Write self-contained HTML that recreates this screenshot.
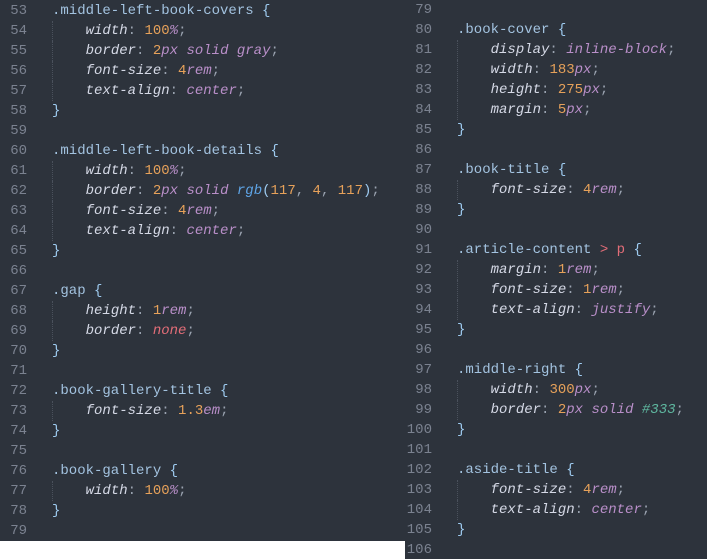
<!DOCTYPE html><html><head><style>
body{margin:0;width:707px;height:559px;background:#fff;overflow:hidden;font-family:"Liberation Mono",monospace;font-size:14px}
.p{position:absolute;top:0;background:#2d333c}
.l{height:20px;line-height:20px;white-space:pre;position:relative}
.n{display:inline-block;width:27px;text-align:right;color:#7b8290;margin-right:25px}
.i::before{content:"";position:absolute;left:52px;top:0;height:20px;border-left:1px dotted #4a515c}
.s{color:#a3c3e0}.k{color:#d5d9e6;font-style:italic}.v{color:#e6a15a}.u{color:#b98fc9;font-style:italic}.w{color:#b98fc9;font-style:italic}
.r{color:#e26d78;font-style:italic}.f{color:#5fa6e8;font-style:italic}.c{color:#9aa3b0}.b{color:#9ecbf0}.h{color:#5fb8a0;font-style:italic}
</style></head><body>
<div class="p" style="left:0;width:405px;height:540px;padding-top:1px">
<div class="l"><span class="n">53</span><span class="s">.middle-left-book-covers</span> <span class="b">{</span></div>
<div class="l i"><span class="n">54</span>    <span class="k">width</span><span class="c">:</span> <span class="v">100</span><span class="u">%</span><span class="c">;</span></div>
<div class="l i"><span class="n">55</span>    <span class="k">border</span><span class="c">:</span> <span class="v">2</span><span class="u">px</span> <span class="w">solid gray</span><span class="c">;</span></div>
<div class="l i"><span class="n">56</span>    <span class="k">font-size</span><span class="c">:</span> <span class="v">4</span><span class="u">rem</span><span class="c">;</span></div>
<div class="l i"><span class="n">57</span>    <span class="k">text-align</span><span class="c">:</span> <span class="w">center</span><span class="c">;</span></div>
<div class="l"><span class="n">58</span><span class="b">}</span></div>
<div class="l"><span class="n">59</span></div>
<div class="l"><span class="n">60</span><span class="s">.middle-left-book-details</span> <span class="b">{</span></div>
<div class="l i"><span class="n">61</span>    <span class="k">width</span><span class="c">:</span> <span class="v">100</span><span class="u">%</span><span class="c">;</span></div>
<div class="l i"><span class="n">62</span>    <span class="k">border</span><span class="c">:</span> <span class="v">2</span><span class="u">px</span> <span class="w">solid</span> <span class="f">rgb</span><span class="b">(</span><span class="v">117</span><span class="c">,</span> <span class="v">4</span><span class="c">,</span> <span class="v">117</span><span class="b">)</span><span class="c">;</span></div>
<div class="l i"><span class="n">63</span>    <span class="k">font-size</span><span class="c">:</span> <span class="v">4</span><span class="u">rem</span><span class="c">;</span></div>
<div class="l i"><span class="n">64</span>    <span class="k">text-align</span><span class="c">:</span> <span class="w">center</span><span class="c">;</span></div>
<div class="l"><span class="n">65</span><span class="b">}</span></div>
<div class="l"><span class="n">66</span></div>
<div class="l"><span class="n">67</span><span class="s">.gap</span> <span class="b">{</span></div>
<div class="l i"><span class="n">68</span>    <span class="k">height</span><span class="c">:</span> <span class="v">1</span><span class="u">rem</span><span class="c">;</span></div>
<div class="l i"><span class="n">69</span>    <span class="k">border</span><span class="c">:</span> <span class="r">none</span><span class="c">;</span></div>
<div class="l"><span class="n">70</span><span class="b">}</span></div>
<div class="l"><span class="n">71</span></div>
<div class="l"><span class="n">72</span><span class="s">.book-gallery-title</span> <span class="b">{</span></div>
<div class="l i"><span class="n">73</span>    <span class="k">font-size</span><span class="c">:</span> <span class="v">1.3</span><span class="u">em</span><span class="c">;</span></div>
<div class="l"><span class="n">74</span><span class="b">}</span></div>
<div class="l"><span class="n">75</span></div>
<div class="l"><span class="n">76</span><span class="s">.book-gallery</span> <span class="b">{</span></div>
<div class="l i"><span class="n">77</span>    <span class="k">width</span><span class="c">:</span> <span class="v">100</span><span class="u">%</span><span class="c">;</span></div>
<div class="l"><span class="n">78</span><span class="b">}</span></div>
<div class="l"><span class="n">79</span></div>
</div>
<div class="p" style="left:405px;width:302px;height:559px;padding-top:0">
<div class="l"><span class="n">79</span></div>
<div class="l"><span class="n">80</span><span class="s">.book-cover</span> <span class="b">{</span></div>
<div class="l i"><span class="n">81</span>    <span class="k">display</span><span class="c">:</span> <span class="w">inline-block</span><span class="c">;</span></div>
<div class="l i"><span class="n">82</span>    <span class="k">width</span><span class="c">:</span> <span class="v">183</span><span class="u">px</span><span class="c">;</span></div>
<div class="l i"><span class="n">83</span>    <span class="k">height</span><span class="c">:</span> <span class="v">275</span><span class="u">px</span><span class="c">;</span></div>
<div class="l i"><span class="n">84</span>    <span class="k">margin</span><span class="c">:</span> <span class="v">5</span><span class="u">px</span><span class="c">;</span></div>
<div class="l"><span class="n">85</span><span class="b">}</span></div>
<div class="l"><span class="n">86</span></div>
<div class="l"><span class="n">87</span><span class="s">.book-title</span> <span class="b">{</span></div>
<div class="l i"><span class="n">88</span>    <span class="k">font-size</span><span class="c">:</span> <span class="v">4</span><span class="u">rem</span><span class="c">;</span></div>
<div class="l"><span class="n">89</span><span class="b">}</span></div>
<div class="l"><span class="n">90</span></div>
<div class="l"><span class="n">91</span><span class="s">.article-content</span> <span class="r" style="font-style:normal">&gt; p</span> <span class="b">{</span></div>
<div class="l i"><span class="n">92</span>    <span class="k">margin</span><span class="c">:</span> <span class="v">1</span><span class="u">rem</span><span class="c">;</span></div>
<div class="l i"><span class="n">93</span>    <span class="k">font-size</span><span class="c">:</span> <span class="v">1</span><span class="u">rem</span><span class="c">;</span></div>
<div class="l i"><span class="n">94</span>    <span class="k">text-align</span><span class="c">:</span> <span class="w">justify</span><span class="c">;</span></div>
<div class="l"><span class="n">95</span><span class="b">}</span></div>
<div class="l"><span class="n">96</span></div>
<div class="l"><span class="n">97</span><span class="s">.middle-right</span> <span class="b">{</span></div>
<div class="l i"><span class="n">98</span>    <span class="k">width</span><span class="c">:</span> <span class="v">300</span><span class="u">px</span><span class="c">;</span></div>
<div class="l i"><span class="n">99</span>    <span class="k">border</span><span class="c">:</span> <span class="v">2</span><span class="u">px</span> <span class="w">solid</span> <span class="h">#333</span><span class="c">;</span></div>
<div class="l"><span class="n">100</span><span class="b">}</span></div>
<div class="l"><span class="n">101</span></div>
<div class="l"><span class="n">102</span><span class="s">.aside-title</span> <span class="b">{</span></div>
<div class="l i"><span class="n">103</span>    <span class="k">font-size</span><span class="c">:</span> <span class="v">4</span><span class="u">rem</span><span class="c">;</span></div>
<div class="l i"><span class="n">104</span>    <span class="k">text-align</span><span class="c">:</span> <span class="w">center</span><span class="c">;</span></div>
<div class="l"><span class="n">105</span><span class="b">}</span></div>
<div class="l"><span class="n">106</span></div>
</div>
</body></html>
